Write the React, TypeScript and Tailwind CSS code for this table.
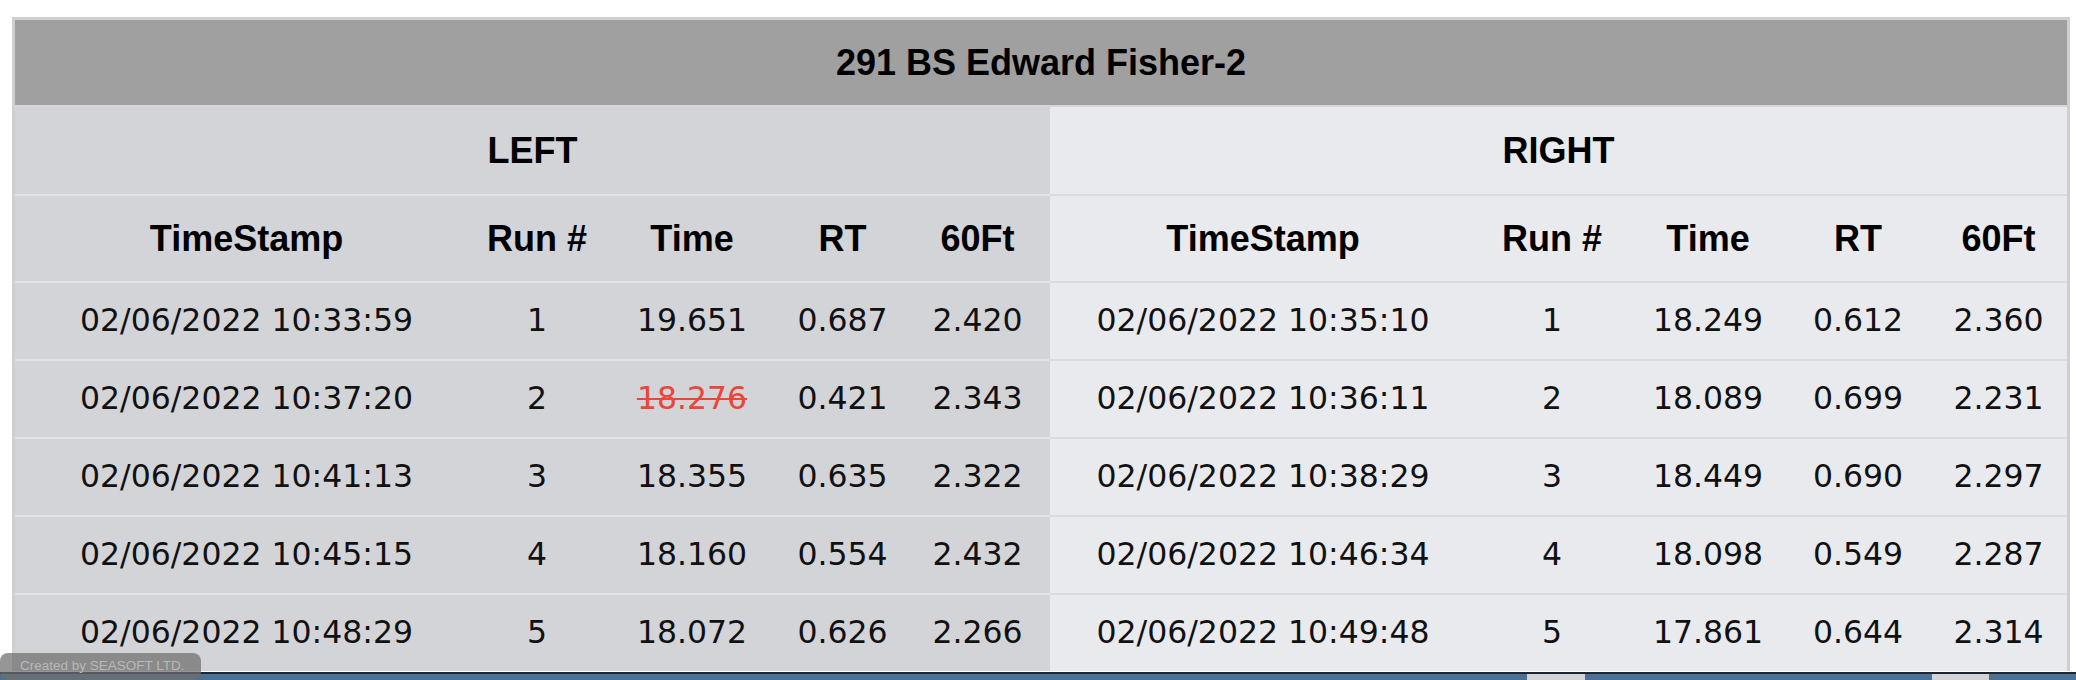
import React from 'react';

type Run = { ts: string; run: number; time: string; rt: string; ft: string; struck?: boolean };

const leftRuns: Run[] = [
  { ts: '02/06/2022 10:33:59', run: 1, time: '19.651', rt: '0.687', ft: '2.420' },
  { ts: '02/06/2022 10:37:20', run: 2, time: '18.276', rt: '0.421', ft: '2.343', struck: true },
  { ts: '02/06/2022 10:41:13', run: 3, time: '18.355', rt: '0.635', ft: '2.322' },
  { ts: '02/06/2022 10:45:15', run: 4, time: '18.160', rt: '0.554', ft: '2.432' },
  { ts: '02/06/2022 10:48:29', run: 5, time: '18.072', rt: '0.626', ft: '2.266' },
];

const rightRuns: Run[] = [
  { ts: '02/06/2022 10:35:10', run: 1, time: '18.249', rt: '0.612', ft: '2.360' },
  { ts: '02/06/2022 10:36:11', run: 2, time: '18.089', rt: '0.699', ft: '2.231' },
  { ts: '02/06/2022 10:38:29', run: 3, time: '18.449', rt: '0.690', ft: '2.297' },
  { ts: '02/06/2022 10:46:34', run: 4, time: '18.098', rt: '0.549', ft: '2.287' },
  { ts: '02/06/2022 10:49:48', run: 5, time: '17.861', rt: '0.644', ft: '2.314' },
];

const headFont = "font-['Liberation_Sans',Arial,sans-serif] font-bold text-[36px] text-black";
const dataFont = "font-['DejaVu_Sans',Verdana,sans-serif] text-[31.5px] text-[#111]";

interface LaneProps {
  title: string;
  runs: Run[];
  cols: string;
  bg: string;
  line: string;
  width: string;
  firstPad: string;
}

const Lane: React.FC<LaneProps> = ({ title, runs, cols, bg, line, width, firstPad }) => (
  <div className={`flex flex-col ${bg} ${width}`}>
    <div className={`h-[89px] flex items-center justify-center border-b-2 ${line} ${headFont}`}>{title}</div>
    <div className={`grid ${cols} h-[87px] items-center text-center border-b-2 ${line} ${headFont}`}>
      <div className={firstPad}>TimeStamp</div>
      <div>Run #</div>
      <div>Time</div>
      <div>RT</div>
      <div>60Ft</div>
    </div>
    {runs.map((r, i) => (
      <div
        key={r.run}
        className={`grid ${cols} items-center text-center ${dataFont} ${i < runs.length - 1 ? `h-[78px] border-b-2 ${line}` : 'h-[76px]'}`}
      >
        <div className={firstPad}>{r.ts}</div>
        <div>{r.run}</div>
        <div className={r.struck ? 'text-[#e8473b] line-through decoration-2' : ''}>{r.time}</div>
        <div>{r.rt}</div>
        <div>{r.ft}</div>
      </div>
    ))}
  </div>
);

export default function App() {
  return (
    <div className="relative w-[2076px] h-[680px] bg-white overflow-hidden">
      <div className="pt-[17px] pl-[12px]">
        <div className="w-[2058px] border-[3px] border-b-0 border-[#cfcfcf]">
          <div className={`h-[87px] bg-[#a0a0a0] border-b-2 border-[#d6d6d8] flex items-center justify-center ${headFont}`}>
            291 BS Edward Fisher-2
          </div>
          <div className="flex">
            <Lane
              title="LEFT"
              runs={leftRuns}
              cols="grid-cols-[455px_134px_176px_125px_145px]"
              bg="bg-[#d3d4d8]"
              line="border-[#e2e3e6]"
              width="w-[1035px]"
              firstPad="pl-[8px]"
            />
            <Lane
              title="RIGHT"
              runs={rightRuns}
              cols="grid-cols-[424px_156px_156px_144px_137px]"
              bg="bg-[#e9eaee]"
              line="border-[#dadbde]"
              width="w-[1017px]"
              firstPad="pl-[2px]"
            />
          </div>
        </div>
      </div>
      <div className="mt-[1px] h-[2px] bg-[#1d2733]" />
      <div className="h-[6px] bg-[#4b7295] flex">
        <div className="ml-[1527px] w-[58px] bg-[#d4d4d4]" />
        <div className="ml-[347px] w-[57px] bg-[#d4d4d4]" />
      </div>
      <div className="absolute left-0 top-[653px] w-[201px] h-[27px] rounded-lg bg-[rgba(110,110,110,0.72)] pl-[20px] pt-[3px] font-['Liberation_Sans',Arial,sans-serif] text-[13.5px] text-[#b8b8b8]">
        Created by SEASOFT LTD.
      </div>
    </div>
  );
}
